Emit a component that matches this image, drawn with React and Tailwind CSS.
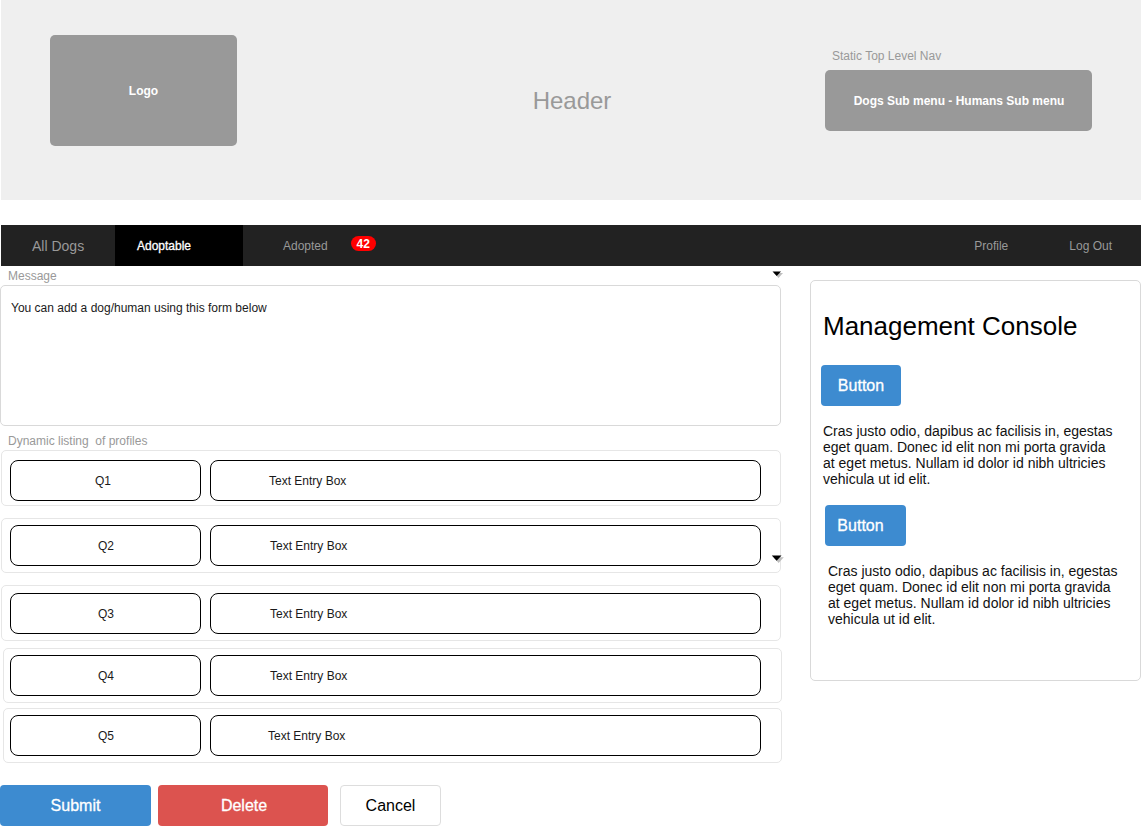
const font = "font-['Liberation_Sans',Arial,sans-serif]";
const semi = "[-webkit-text-stroke:0.3px_white]";

const rows = [
    { id: "Q1", row: "ml-[1px] w-[780px] h-[56px] mt-[2px] pt-[9px]", qLeft: "left-[8px]", textLeft: "left-[208px]", q: "pr-[5px]", text: "pl-[58px]" },
    { id: "Q2", row: "ml-[1px] w-[780px] h-[55px] mt-[12px] pt-[6px]", qLeft: "left-[8px]", textLeft: "left-[208px]", q: "pl-[1px]", text: "pl-[59px]" },
    { id: "Q3", row: "ml-[1px] w-[780px] h-[56px] mt-[12px] pt-[7px]", qLeft: "left-[8px]", textLeft: "left-[208px]", q: "pl-[1px]", text: "pl-[59px]" },
    { id: "Q4", row: "ml-[3px] w-[779px] h-[55px] mt-[7px] pt-[6px]", qLeft: "left-[6px]", textLeft: "left-[206px]", q: "pl-[1px]", text: "pl-[59px]" },
    { id: "Q5", row: "ml-[3px] w-[779px] h-[55px] mt-[5px] pt-[6px]", qLeft: "left-[6px]", textLeft: "left-[206px]", q: "pl-[1px]", text: "pl-[57px]" },
];

const Caret = ({ className, width = 11, height = 7 }) => (
    <svg className={className} width={width} height={height} viewBox="0 0 11 7">
        <path d="M2 2h9l-4.500 5z" fill="#bdbdbd" />
        <path d="M0.500 0.500h8.500l-4.250 4.500z" fill="#000" />
    </svg>
);

const Row = ({ value }) => (
    <div className={`relative box-border rounded-[5px] border border-[#e6e6e6] ${value.row}`}>
        <div className={`absolute flex h-[41px] w-[191px] items-center justify-center rounded-[8px] border border-black text-[12px] text-[#1a1a1a] ${value.qLeft} ${value.q}`}>
            {value.id}
        </div>
        <div className={`absolute flex h-[41px] w-[551px] items-center rounded-[8px] border border-black text-[12px] text-[#1a1a1a] ${value.textLeft} ${value.text}`}>
            Text Entry Box
        </div>
    </div>
);

const Console = ({ button, text }) => (
    <>
        <div className={`flex h-[41px] items-center justify-center rounded-[4px] bg-[#3d8bd0] text-[16px] text-white ${semi} ${button}`}>
            Button
        </div>
        <p className={`w-[295px] text-[14px] leading-[16px] text-[#111] ${text}`}>
            Cras justo odio, dapibus ac facilisis in, egestas eget quam. Donec id elit non mi porta gravida at eget metus. Nullam id dolor id nibh ultricies vehicula ut id elit.
        </p>
    </>
);

const App = () => {
    return (
        <div className={`relative h-[826px] w-[1142px] overflow-hidden bg-white ${font}`}>
            <header className="ml-[1px] flex h-[200px] w-[1140px] bg-[#efefef]">
                <div className="ml-[49px] mt-[35px] flex h-[111px] w-[187px] items-center justify-center rounded-[5px] bg-[#999999] text-[12px] font-bold text-white">
                    Logo
                </div>
                <div className="ml-[295px] mt-[87px] w-[80px] text-center text-[24px] leading-[28px] text-[#999999]">Header</div>
                <div className="ml-[213px] mt-[49px]">
                    <div className="ml-[7px] text-[12px] leading-[14px] text-[#999999]">Static Top Level Nav</div>
                    <div className="mt-[7px] flex h-[61px] w-[267px] items-center justify-center rounded-[5px] bg-[#999999] pl-[1px] text-[12px] font-bold text-white">
                        Dogs Sub menu - Humans Sub menu
                    </div>
                </div>
            </header>

            <nav className="ml-[1px] mt-[25px] flex h-[41px] w-[1140px] items-center bg-[#222222] text-[12px] text-[#999999]">
                <div className="ml-[31px] w-[83px] pt-[2px] text-[14px]">All Dogs</div>
                <div className={`flex h-full w-[128px] items-center bg-black pl-[22px] pt-[1px] text-white ${semi}`}>Adoptable</div>
                <div className="ml-[40px] pt-[1px]">Adopted</div>
                <div className="ml-[23px] mb-[4px] flex h-[15px] w-[25px] items-center justify-center rounded-full bg-[#ff0000] text-[12px] font-bold text-white">42</div>
                <div className="ml-auto">Profile</div>
                <div className="ml-[61px] mr-[29px]">Log Out</div>
            </nav>

            <main className="flex">
                <div className="w-[782px]">
                    <div className="ml-[8px] mt-[3px] text-[12px] leading-[14px] text-[#999999]">Message</div>
                    <div className="mt-[2px] box-border h-[141px] w-[781px] rounded-[5px] border border-[#d9d9d9] pl-[10px] pt-[15px] text-[12px] leading-[14px] text-[#1a1a1a]">
                        You can add a dog/human using this form below
                    </div>
                    <div className="ml-[8px] mt-[8px] whitespace-pre text-[12px] leading-[14px] text-[#999999]">Dynamic listing  of profiles</div>
                    {rows.map((value) => (
                        <Row key={value.id} value={value} />
                    ))}
                    <div className="mt-[22px] flex text-[16px]">
                        <div className={`flex h-[41px] w-[151px] items-center justify-center rounded-[4px] bg-[#3d8bd0] text-white ${semi}`}>Submit</div>
                        <div className={`ml-[7px] flex h-[41px] w-[170px] items-center justify-center rounded-[4px] bg-[#dc534f] pl-[2px] text-white ${semi}`}>Delete</div>
                        <div className="ml-[12px] box-border flex h-[41px] w-[101px] items-center justify-center rounded-[4px] border border-[#dddddd] text-black">Cancel</div>
                    </div>
                </div>

                <aside className="ml-[28px] mt-[14px] box-border h-[401px] w-[331px] rounded-[5px] border border-[#d9d9d9]">
                    <h1 className="ml-[12px] mt-[30px] text-[26px] leading-[30px] text-black">Management Console</h1>
                    <Console button="ml-[10px] mt-[24px] w-[80px]" text="ml-[12px] mt-[17px]" />
                    <Console button="ml-[14px] mt-[18px] w-[81px] pr-[10px]" text="ml-[17px] mt-[17px]" />
                </aside>
            </main>

            <Caret className="absolute left-[772px] top-[271px]" />
            <Caret className="absolute left-[771px] top-[555px]" width={13} height={8} />
        </div>
    )
}

export default App;
